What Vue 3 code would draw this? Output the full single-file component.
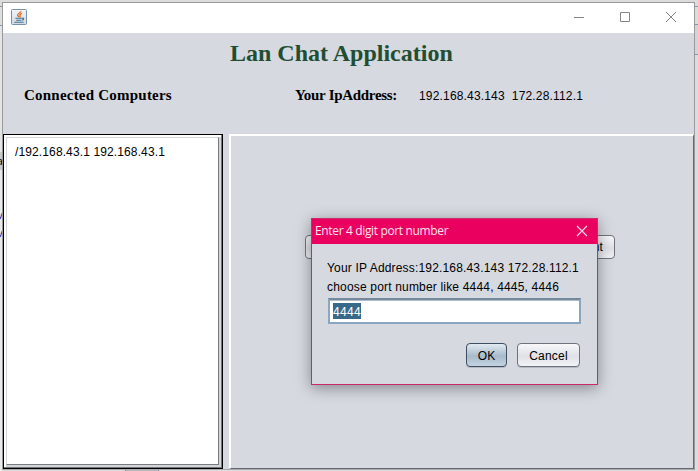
<script setup>
import { ref } from 'vue'

const port = ref('4444')
const computers = ['/192.168.43.1 192.168.43.1']
</script>

<template>
  <div class="desktop">
    <div class="behind behind-left">
      <span class="frag frag-a">a</span>
      <span class="frag frag-b">v</span>
      <span class="frag frag-c">v</span>
    </div>
    <div class="behind behind-right"></div>
    <div class="behind-bottom"></div>

    <div class="window">
      <header class="titlebar">
        <svg class="java" width="16" height="16" viewBox="0 0 16 16">
          <defs>
            <linearGradient id="jbg" x1="0" y1="0" x2="0" y2="1">
              <stop offset="0" stop-color="#f1f4f8" />
              <stop offset="1" stop-color="#d0dae5" />
            </linearGradient>
          </defs>
          <rect x="0.5" y="0.5" width="15" height="15" rx="1" fill="url(#jbg)" stroke="#7890aa" />
          <path d="M9.8 2.2C10 4 6 4.6 6.6 6.2C6.9 7 7.8 7.4 7.8 8.2M11 4.4C9.4 5 8.4 5.8 9 6.7C9.4 7.3 9.2 7.7 8.7 8.2" fill="none" stroke="#e0742a" stroke-width="1.4" />
          <path d="M4.4 9.3H11.2M5.2 11.3H10.4M11.2 9.2C13.4 8.6 13.2 10.9 10.9 11.2M3.2 13.3H12.6" fill="none" stroke="#4a7090" stroke-width="1.1" />
        </svg>
        <div class="controls">
          <svg width="12" height="12" viewBox="0 0 12 12"><path d="M1 6.5H11" /></svg>
          <svg width="12" height="12" viewBox="0 0 12 12"><path d="M1.5 1.5H10.5V10.5H1.5Z" /></svg>
          <svg width="12" height="12" viewBox="0 0 12 12"><path d="M1 1L11 11M11 1L1 11" /></svg>
        </div>
      </header>

      <section class="head">
        <h1>Lan Chat Application</h1>
        <div class="info">
          <h2 class="connected">Connected Computers</h2>
          <h2 class="your-ip">Your IpAddress:</h2>
          <span class="ips">192.168.43.143&nbsp; 172.28.112.1</span>
        </div>
      </section>

      <main class="body">
        <div class="list-frame">
          <ul class="list">
            <li v-for="c in computers" :key="c">{{ c }}</li>
          </ul>
        </div>
        <div class="chat">
          <div class="connect"><span>nt</span></div>
        </div>
      </main>
    </div>

    <div class="dialog">
      <header class="dialog-title">
        <span>Enter 4 digit port number</span>
        <svg width="12" height="12" viewBox="0 0 12 12"><path d="M1 1L11 11M11 1L1 11" /></svg>
      </header>
      <div class="dialog-body">
        <p class="line-ip">Your IP Address:192.168.43.143 172.28.112.1</p>
        <p class="line-port">choose port number like 4444, 4445, 4446</p>
        <div class="field"><span>{{ port }}</span></div>
        <div class="actions">
          <button class="ok"><span>OK</span></button>
          <button class="cancel"><span>Cancel</span></button>
        </div>
      </div>
    </div>
  </div>
</template>

<style>
body {
  margin: 0;
  overflow: hidden;
}
</style>

<style scoped>
* {
  box-sizing: border-box;
}
.desktop {
  position: relative;
  width: 698px;
  height: 471px;
  overflow: hidden;
  background: #dcdcdc;
  font: 12px/14px "Liberation Sans", Arial, sans-serif;
  letter-spacing: 0.17px;
  color: #000;
}
.behind {
  position: absolute;
  top: 6px;
  height: 465px;
}
.behind-left {
  left: 0;
  width: 3px;
  background: linear-gradient(#8e959e 0 1px, #dedede 1px 19px, #8c98a4 19px 20px, #e4e4e4 20px 146px, #c8c8c8 146px 164px, #e9e9e9 164px);
}
.behind-right {
  right: 0;
  width: 4px;
  background: linear-gradient(#8e9aa5 0 1px, #dcdedc 1px 18px, #8798a3 18px 19px, #d4d4d6 19px 48px, #8799a6 48px 49px, #dcdcdc 49px);
}
.behind-bottom {
  position: absolute;
  left: 125px;
  top: 469px;
  width: 34px;
  height: 2px;
  background: #b9babd;
  border-left: 1px solid #8090a0;
  border-right: 1px solid #8090a0;
}
.frag {
  position: absolute;
  right: 0;
  font-size: 11px;
}
.frag-a { top: 148px; }
.frag-b { top: 202px; color: #2222aa; }
.frag-c { top: 220px; color: #2222aa; }
.window {
  position: absolute;
  left: 2px;
  top: 2px;
  width: 693px;
  height: 468px;
  display: flex;
  flex-direction: column;
  background: #d6d9e0;
  border: 1px solid #999a9c;
  border-bottom-color: #a9aaac;
}
.titlebar {
  height: 30px;
  flex: none;
  display: flex;
  align-items: center;
  justify-content: space-between;
  padding: 0 17px 2px 8px;
  background: #fff;
}
.java {
  display: block;
}
.controls {
  display: flex;
  gap: 34px;
}
.controls svg {
  display: block;
  fill: none;
  stroke: #858585;
}
.head {
  height: 101px;
  flex: none;
}
h1,
h2 {
  margin: 0;
  font-family: "Liberation Serif", "Times New Roman", serif;
  font-weight: bold;
  white-space: nowrap;
}
h1 {
  padding: 6px 0 0 227px;
  font-size: 24px;
  line-height: 28px;
  letter-spacing: 0;
  color: #1f4e33;
}
.info {
  display: flex;
  padding-top: 19px;
  align-items: baseline;
}
h2 {
  font-size: 15px;
  line-height: 18px;
}
.connected {
  width: 270px;
  padding-left: 21px;
  letter-spacing: 0.22px;
}
.your-ip {
  width: 146px;
  padding-left: 22px;
  letter-spacing: -0.3px;
}
.ips {
  white-space: nowrap;
}
.body {
  flex: 1;
  display: flex;
  gap: 6px;
}
.list-frame {
  width: 220px;
  border: 1px solid #000;
  background: #d3d5d9;
  padding: 2px 3px 3px 2px;
  box-shadow: inset -1px -1px #73777d, inset 2px 2px #fff;
}
.list {
  height: 100%;
  margin: 0;
  padding: 7px 0 0 8px;
  list-style: none;
  background: #fff;
  border: 1px solid #d3d5d8;
  border-right-color: #777a7f;
  border-bottom-color: #777a7f;
  white-space: nowrap;
  letter-spacing: 0.12px;
}
.chat {
  flex: 1;
  border: 2px solid #fff;
  border-right: 1px solid #66696f;
  border-bottom: 1px solid #66696f;
  padding: 99px 0 0 74px;
}
.connect {
  width: 310px;
  height: 24px;
  display: flex;
  align-items: center;
  justify-content: flex-end;
  padding-right: 11px;
  border: 1px solid #70757d;
  border-radius: 4px;
  background: linear-gradient(#f8f8fa, #dfe1e7 55%, #f0f1f5);
}
.dialog {
  position: absolute;
  left: 311px;
  top: 218px;
  width: 287px;
  height: 167px;
  border: 1px solid #cb2969;
  background: #d6d9e0;
  box-shadow: 0 3px 14px rgba(0, 0, 0, 0.38);
}
.dialog-title {
  height: 25px;
  display: flex;
  align-items: center;
  justify-content: space-between;
  padding: 0 9px 1px 3px;
  background: #ea005e;
  color: #ffe5f0;
  font-family: "Open Sans", "Noto Sans", sans-serif;
  font-size: 12px;
  letter-spacing: -0.35px;
}
.dialog-title svg {
  display: block;
  fill: none;
  stroke: #ffd9e8;
  stroke-width: 1.2;
}
.dialog-body {
  padding: 17px 17px 0 15px;
}
p {
  margin: 0 0 5px;
  white-space: nowrap;
}
.line-port {
  margin-bottom: 4px;
  letter-spacing: 0.18px;
}
.field {
  width: 253px;
  height: 26px;
  display: flex;
  align-items: center;
  padding-left: 3px;
  margin-left: 1px;
  background: #fff;
  border: 2px solid #8ba6c0;
  border-top-color: #75899e;
  box-shadow: inset 0 1px #b4bcc6;
}
.field span {
  height: 16px;
  line-height: 18px;
  background: #39698a;
  color: #fff;
  letter-spacing: 0.3px;
}
.actions {
  display: flex;
  justify-content: flex-end;
  gap: 10px;
  padding-top: 19px;
}
button {
  display: flex;
  align-items: center;
  justify-content: center;
  height: 24px;
  padding: 1px 0 0;
  font: inherit;
  letter-spacing: 0.2px;
  color: #000;
  border: 1px solid #6d737b;
  border-radius: 4px;
  background: linear-gradient(#f8f8fa, #dfe1e7 55%, #f2f3f7);
  box-shadow: 0 1px rgba(120, 125, 135, 0.35);
}
.ok {
  width: 41px;
  border-color: #3e4f62;
  background: linear-gradient(#e2eaf1, #a8bacb 55%, #c3d3e1);
}
.cancel {
  width: 63px;
}
</style>
